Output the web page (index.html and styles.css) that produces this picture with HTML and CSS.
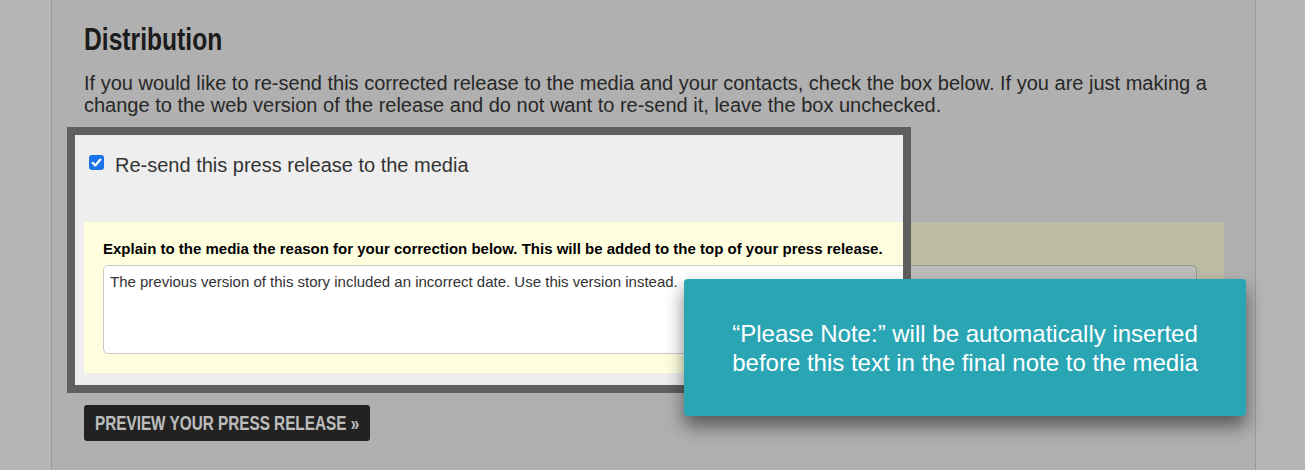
FILE: index.html
```html
<!DOCTYPE html>
<html lang="en">
<head>
<meta charset="utf-8">
<title>Distribution</title>
<link rel="stylesheet" href="styles.css">
</head>
<body>
<div class="page">
  <main class="panel">
    <h2 class="title"><span class="condensed">Distribution</span></h2>
    <p class="intro">If you would like to re-send this corrected release to the media and your contacts, check the box below. If you are just making a change to the web version of the release and do not want to re-send it, leave the box unchecked.</p>
    <label class="check-row">
      <span class="checkbox"><svg width="15" height="15" viewBox="0 0 15 15"><path d="M3.6 7.8 L6.3 10.4 L11.4 4.6" fill="none" stroke="#fff" stroke-width="2.2" stroke-linecap="round" stroke-linejoin="round"/></svg></span>
      <span class="check-text">Re-send this press release to the media</span>
    </label>
    <div class="note-box">
      <div class="note-label">Explain to the media the reason for your correction below. This will be added to the top of your press release.</div>
      <div class="note-input">The previous version of this story included an incorrect date. Use this version instead.</div>
    </div>
    <button class="preview-btn"><span class="condensed">PREVIEW YOUR PRESS RELEASE &raquo;</span></button>
  </main>
</div>
<div class="spotlight"></div>
<div class="tour-tip">“Please Note:” will be automatically inserted<br>before this text in the final note to the media</div>
</body>
</html>
```

FILE: styles.css
```css
html, body {
  margin: 0;
  padding: 0;
}
body {
  background: #f5f5f5;
  font-family: "Liberation Sans", Arial, sans-serif;
  color: #333;
  height: 470px;
  overflow: hidden;
  position: relative;
}
.page {
  padding-left: 51px;
}
.panel {
  width: 1140px;
  height: 470px;
  background: #eeeeee;
  border-left: 1px solid #d0d0d0;
  border-right: 1px solid #d0d0d0;
  padding: 21px 31px 0 32px;
  box-sizing: content-box;
}
.condensed {
  display: inline-block;
  white-space: nowrap;
  transform: scaleX(0.77);
  transform-origin: 0 50%;
}
.title {
  margin: 0;
  font-weight: bold;
  font-size: 32px;
  line-height: 36px;
  color: #262626;
}
.intro {
  margin: 15px 0 0;
  font-size: 20px;
  line-height: 22px;
  color: #363636;
}
.check-row {
  display: flex;
  align-items: flex-start;
  gap: 11px;
  margin: 38px 0 0 5px;
}
.checkbox {
  display: block;
  width: 15px;
  height: 15px;
  margin-top: 1px;
  border-radius: 3px;
  background: #1a73e8;
  flex: none;
}
.checkbox svg {
  display: block;
}
.check-text {
  font-size: 20px;
  line-height: 22px;
  color: #333;
}
.note-box {
  margin-top: 46px;
  background: #ffffe0;
  padding: 18px 27px 19px 19px;
}
.note-label {
  font-size: 15px;
  line-height: 17px;
  font-weight: bold;
  color: #000;
}
.note-input {
  margin-top: 8px;
  height: 89px;
  box-sizing: border-box;
  background: #fff;
  border: 1px solid #c8c8c8;
  border-radius: 5px;
  padding: 7px 6px;
  font-size: 15px;
  line-height: 18px;
  color: #333;
}
.preview-btn {
  display: block;
  margin-top: 32px;
  width: 286px;
  height: 36px;
  padding: 0 11px;
  border: none;
  border-radius: 3px;
  background: #2f2f2f;
  color: #ffffff;
  font-family: "Liberation Sans", Arial, sans-serif;
  font-weight: bold;
  font-size: 20px;
  line-height: 36px;
  text-align: left;
  overflow: hidden;
}
.preview-btn .condensed {
  transform: scaleX(0.765);
}
.spotlight {
  position: absolute;
  left: 67px;
  top: 127px;
  width: 844px;
  height: 266px;
  box-sizing: border-box;
  border: 8px solid #5f5f5f;
  box-shadow: 0 0 0 3000px rgba(0, 0, 0, 0.26);
}
.tour-tip {
  position: absolute;
  left: 684px;
  top: 279px;
  width: 562px;
  height: 137px;
  box-sizing: border-box;
  background: #2aa5b4;
  border-radius: 4px;
  box-shadow: 0 10px 18px rgba(0, 0, 0, 0.5);
  color: #fff;
  font-size: 24px;
  line-height: 29px;
  text-align: center;
  display: flex;
  align-items: center;
  justify-content: center;
}
```
